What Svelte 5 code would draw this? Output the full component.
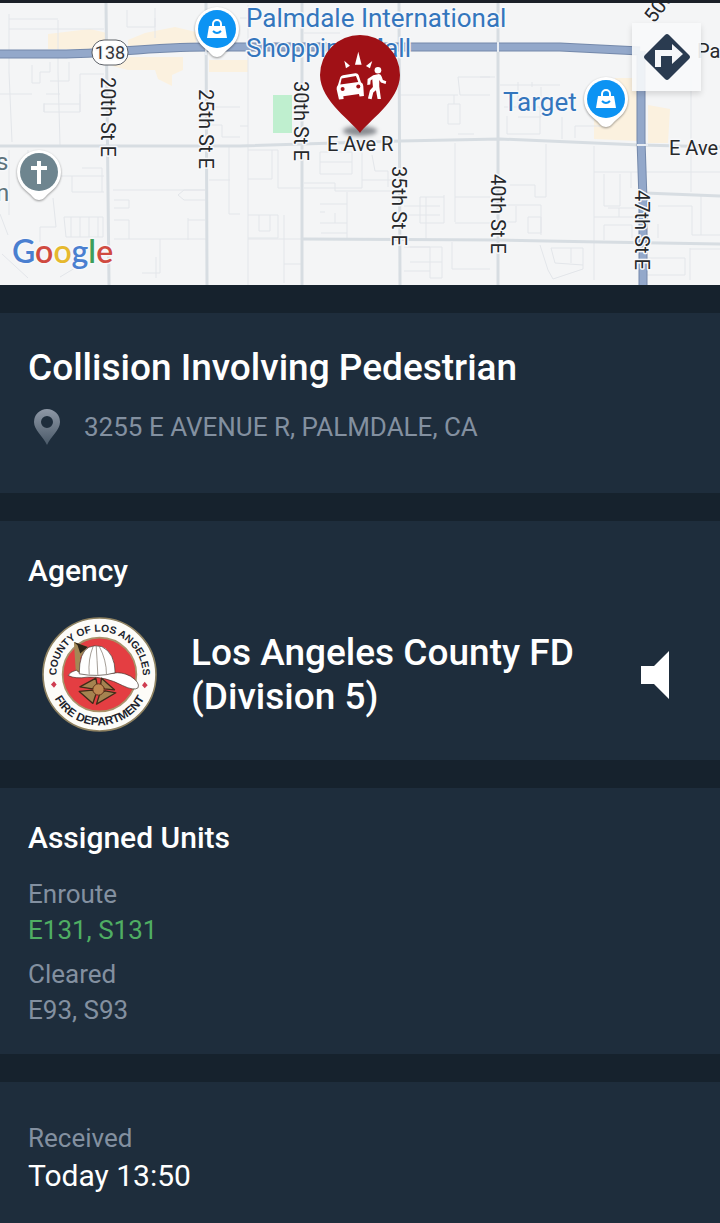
<script lang="ts">
	const incident = {
		type: 'Collision Involving Pedestrian',
		address: '3255 E AVENUE R, PALMDALE, CA',
		agency: 'Los Angeles County FD (Division 5)',
		received: 'Today 13:50'
	};

	const units = [
		{ status: 'Enroute', names: 'E131, S131', active: true },
		{ status: 'Cleared', names: 'E93, S93', active: false }
	];

	const streets = [
		{ name: '20th St E', x: 101, y: 77 },
		{ name: '25th St E', x: 199, y: 89 },
		{ name: '30th St E', x: 294, y: 81 },
		{ name: '35th St E', x: 392, y: 166 },
		{ name: '40th St E', x: 491, y: 174 },
		{ name: '47th St E', x: 635, y: 190 }
	];

	const google = [
		{ letter: 'G', color: '#4a7fd0' },
		{ letter: 'o', color: '#d04a40' },
		{ letter: 'o', color: '#e6b92e' },
		{ letter: 'g', color: '#4a7fd0' },
		{ letter: 'l', color: '#3d9e5a' },
		{ letter: 'e', color: '#d04a40' }
	];
</script>

{#snippet teardrop(x: number, y: number)}
	<path class="poi" transform="translate({x} {y})" d="M0 28C-4 28-6 25-9 22C-13 18-22 13-22 0A22 22 0 0 1 22 0C22 13 13 18 9 22C6 25 4 28 0 28Z" />
{/snippet}

{#snippet shop(x: number, y: number)}
	{@render teardrop(x, y)}
	<g transform="translate({x} {y})">
		<circle r="19" fill="#0c93f3" />
		<path d="M-8-3H8L10 9H-10Z" fill="#fff" />
		<path d="M-4-3V-5A4 4 0 0 1 4-5V-3" fill="none" stroke="#fff" stroke-width="2" />
		<path d="M-4 2Q0 6 4 2" fill="none" stroke="#0c93f3" stroke-width="2" />
	</g>
{/snippet}

<main>
	<div class="map">
		<svg class="tiles" viewBox="0 3 720 282" preserveAspectRatio="xMidYMid slice" role="img" aria-label="Map of the incident">
			<rect y="3" width="720" height="282" fill="#f4f5f6" />
			<g fill="#fbf1df">
				<path d="M48 34L90 29L107 33V49H48ZM128 40L145 33L175 27L196 32V46L128 50ZM112 66L130 57H183V70L172 75V86L158 79L155 70L128 70ZM209 60H248V72H209Z" />
				<path d="M594 112L615 102V78H637V141L594 139ZM648 105L670 109L668 143H648Z" />
			</g>
			<path d="M273 95H292V133H273Z" fill="#bfefcf" />
			<g class="lots">
				<path d="M9 14V72L12 142M9 19H58M9 29H104M58 20V72L60 145M127 10V27H155V8M155 18V38M32 65V83H40V72H50V62M50 81H69V62M0 94H32M46 94H60M44 103V112H80V74H104M44 112V104H80M80 94V112" />
				<path d="M0 214L8 235M9 150V215M28 150V165M40 176H104M72 176V192M82 168H102V192M72 192H104M53 198L56 227H40V242M64 217H103V237H66ZM71 217V237M80 217V237M89 217V237M98 217V237M2 254L28 278M60 277L75 268M113 190H205M114 200H129V208H114M114 220H129V239M114 239H207M188 218V240M188 220H205M160 239V273H142M156 257V278M178 195L184 190H205M178 195L184 200H205" />
				<path d="M214 107H240M208 125H222V137H240M209 180H230M229 147V214H240M240 18H300M304 33H340M248 5V285M240 126H248M248 150H278V188M272 150V179H248M278 188H300M248 215H278V238H248M259 215V231H270V215M284 215V283M248 239H303M284 264H303M304 188H362V145M362 180H400M320 162H352V174H320V152H352V162M304 183H335V191H400M347 192V239M320 204H347M320 223H347M320 212H325M335 213V223M372 155L375 171H388V187M321 233H347" />
				<path d="M400 95H458M458 77H490M458 77L460 95H490M448 104H460V124H448ZM454 104V95M458 134H474M455 143V222M444 197H420V223H444V195M404 206H440M404 215H440M426 197V239M455 197H490M455 223H490M410 247H430V278H442V247H404M410 262H442M452 242V269H490M404 271H430" />
				<path d="M480 77H495M500 85H560M504 107H540V134H507V116M518 82V107M518 117H541V87M532 82V87M562 117V139M575 138V126H600M546 144V197H535V185H510M500 205H541V235M516 206V222L503 222M528 217H541V233H528ZM594 146V280M594 172H720M604 174V206H620V174M631 172V188M594 217H634M604 225H632V238M608 208H636M604 225V240M619 208V217M658 206H692V235M658 224V238M692 235H720M701 196V235M691 76V192M640 258H685V275H640M690 248V280M690 249H720M540 245L548 270L553 279L583 269V248H551L555 263L583 265M571 248V263" />
			</g>
			<g class="roads">
				<path d="M0 146L240 146L400 141L500 139L640 145L720 147M303 239L500 240L600 242L720 244M645 193L720 196" />
				<path d="M106 3L109 285M206 3L207 285M302 3V285M399 3L400 285M498 3V285" />
			</g>
			<path class="highway-edge" d="M0 54H60C110 54 145 47 207 47H560L640 51M641 51V140L643 200V285" />
			<path class="highway" d="M0 54H60C110 54 145 47 207 47H560L640 51M641 51V140L643 200V285" />
			<path d="M206 39V55M498 42V52M637 145H648" stroke="#e8edf4" stroke-width="2" />

			<rect x="92" y="40" width="36" height="25" rx="12" fill="#fff" stroke="#5c6067" stroke-width="1" />
			<text class="shield" x="110" y="59">138</text>
			{#each streets as street}
				<text class="street" transform="translate({street.x} {street.y}) rotate(90)">{street.name}</text>
			{/each}
			<text class="street" x="327" y="151">E Ave R</text>
			<text class="street" x="669" y="155">E Ave</text>
			<text class="street" x="697" y="58">Pa</text>
			<text class="street" transform="translate(654 24) rotate(-53)">50th St E</text>
			<text class="place" x="246" y="27">Palmdale International</text>
			<text class="place" x="246" y="57">Shopping Mall</text>
			<text class="place" x="503" y="111">Target</text>
			<text class="church" x="-4" y="170">s</text>
			<text class="church" x="-4" y="201">n</text>

			{@render shop(217, 29)}
			{@render shop(606, 99)}
			{@render teardrop(39, 172)}
			<circle cx="39" cy="172" r="19" fill="#6e858f" />
			<path d="M39 161V184M31 168H47" stroke="#fff" stroke-width="4" />

			<!-- incident marker -->
			<ellipse class="shadow" cx="360" cy="131" rx="17" ry="5" />
			<path d="M360 133C354 123 320 101 320 75A40 40 0 0 1 400 75C400 101 366 123 360 133Z" fill="#a01116" />
			<g transform="translate(310 30) scale(0.333)" fill="#fff">
				<path d="M103 92L108 115L120 107ZM145 65L135 104H155ZM187 93L168 108L180 115Z" />
				<path fill-rule="evenodd" d="M91 142Q93 137 99 136L136 130Q143 129 146 135L153 157Q160 160 160 168L162 198L149 200L147 192L100 199L101 207L87 209L80 178Q79 170 84 165ZM95 146L91 164L145 156L138 138Z" />
				<circle cx="98" cy="177" r="6" fill="#a01116" />
				<circle cx="145" cy="170" r="6" fill="#a01116" />
				<circle cx="204" cy="121" r="10" />
				<path d="M190 136L207 132Q213 133 215 140L219 150L229 154L227 162L213 158L208 150V170L213 207H203L198 181L190 188L185 208L174 206L180 181L189 171L187 148L182 152L181 164L172 165L173 147Z" />
			</g>
			<text class="google" x="12" y="263">{#each google as { letter, color }}<tspan fill={color}>{letter}</tspan>{/each}</text>
		</svg>

		<button class="directions" aria-label="Directions">
			<svg viewBox="0 0 48 48" width="48" height="48" aria-hidden="true">
				<path d="M22 2Q24 0 26 2L46 22Q48 24 46 26L26 46Q24 48 22 46L2 26Q0 24 2 22Z" fill="#2a3b50" />
				<path d="M12 34V17H29V11L40 21L29 31V23H18V34Z" fill="#f6f7f9" />
			</svg>
		</button>
	</div>

	<section class="incident">
		<h1>{incident.type}</h1>
		<p class="address">
			<svg viewBox="0 0 26 36" width="26" height="36" aria-hidden="true">
				<defs>
					<linearGradient id="pin" x2="0" y2="1">
						<stop stop-color="#8e98a6" />
						<stop offset="1" stop-color="#4a5968" />
					</linearGradient>
				</defs>
				<path fill="url(#pin)" fill-rule="evenodd" d="M13 0A13 13 0 0 1 26 13C26 21 17 27 13 36C9 27 0 21 0 13A13 13 0 0 1 13 0ZM13 7A6 6 0 0 0 13 19A6 6 0 0 0 13 7Z" />
			</svg>
			{incident.address}
		</p>
	</section>

	<section class="agency">
		<h2>Agency</h2>
		<div class="agency-row">
			<svg class="seal" viewBox="36 38 346 346" role="img" aria-label="County of Los Angeles Fire Department">
				<defs>
					<path id="seal-top" d="M82 240A130 130 0 1 1 336 240" />
					<path id="seal-bottom" d="M56 211A153 153 0 0 0 362 211" />
				</defs>
				<circle cx="209" cy="211" r="170" fill="#fdfcf8" stroke="#8f8261" stroke-width="5" />
				<circle cx="209" cy="211" r="111" fill="#e43e42" stroke="#a8926a" stroke-width="5" />
				<text class="ring-top"><textPath href="#seal-top" startOffset="50%">COUNTY OF LOS ANGELES</textPath></text>
				<text class="ring-bottom"><textPath href="#seal-bottom" startOffset="50%">FIRE DEPARTMENT</textPath></text>
				<path d="M72 231L80 241L72 251L63 241ZM345 233L354 243L345 252L337 243Z" fill="#cf3d50" />
				<path d="M132 113L174 128L151 160L148 210L138 208Z" fill="#a48855" />
				<path d="M132 113L174 128L151 148L143 123Z" fill="#2c2418" />
				<path d="M115 214Q119 203 139 198L151 207L250 207Q275 202 302 216Q332 235 325 251Q313 261 278 244Q225 216 172 219Q135 225 115 214Z" fill="#fff" stroke="#40322b" stroke-width="2" />
				<path d="M148 209Q148 144 177 129Q194 121 216 127Q256 147 256 206Q205 220 148 209Z" fill="#fff" stroke="#40322b" stroke-width="2" />
				<path d="M190 126Q174 166 178 211M199 125Q202 168 204 213M208 126Q230 167 230 211" fill="none" stroke="#756d62" stroke-width="2" />
				<!-- maltese cross, one wedge for each arm -->
				<g fill="#a58350" stroke="#412b19" stroke-width="4" stroke-linejoin="round">
					<path d="M198 222L150 248L188 254L202 244Z" />
					<path d="M215 222L254 257L224 254L212 244Z" />
					<path d="M148 262L189 298L199 268L188 258Z" />
					<path d="M258 266L200 300L210 268L226 260Z" />
				</g>
				<circle cx="206" cy="256" r="17" fill="#bd8852" stroke="#62341d" stroke-width="3" />
			</svg>
			<h3>{incident.agency}</h3>
			<button class="listen" aria-label="Listen to agency">
				<svg viewBox="0 0 28 48" width="28" height="48" aria-hidden="true">
					<path d="M0 15H13L28 0V48L13 33H0Z" fill="#fff" />
				</svg>
			</button>
		</div>
	</section>

	<section class="units">
		<h2>Assigned Units</h2>
		<dl>
			{#each units as unit}
				<div>
					<dt>{unit.status}</dt>
					<dd class:active={unit.active}>{unit.names}</dd>
				</div>
			{/each}
		</dl>
	</section>

	<section class="received">
		<dl>
			<dt>Received</dt>
			<dd>{incident.received}</dd>
		</dl>
	</section>
</main>

<style>
	:global(body) {
		margin: 0;
		background: #1e2d3c;
	}

	main {
		display: flex;
		flex-direction: column;
		gap: 28px;
		min-height: 100vh;
		background: #16222d;
		color: #fff;
		font-family: Roboto, 'Liberation Sans', sans-serif;
		font-size: 26px;
		line-height: 36px;
	}

	h1,
	h2,
	h3,
	p,
	dl,
	dd {
		margin: 0;
		font-weight: 500;
	}

	button {
		display: grid;
		place-items: center;
		padding: 0;
		border: none;
		background: none;
		cursor: pointer;
	}

	section {
		padding: 28px;
		background: #1e2d3c;
	}

	.map {
		position: relative;
		padding-top: 3px;
		background: #1b2028;
	}

	.tiles {
		display: block;
		width: 100%;
		height: 282px;
	}

	.lots {
		fill: none;
		stroke: #e3e6ea;
		stroke-width: 1;
	}

	.roads {
		fill: none;
		stroke: #d7dde2;
		stroke-width: 3;
	}

	.highway,
	.highway-edge {
		fill: none;
		stroke: #93a8ca;
		stroke-width: 7;
	}

	.highway-edge {
		stroke: #7489ab;
		stroke-width: 9;
	}

	.tiles text {
		paint-order: stroke;
		stroke: #f7f8fa;
		stroke-width: 3;
		stroke-linejoin: round;
	}

	.tiles .street {
		fill: #26282b;
		font-size: 20px;
	}

	.tiles .shield {
		fill: #333539;
		font-size: 18px;
		text-anchor: middle;
	}

	.tiles .place {
		fill: #3476bd;
		font-size: 26px;
	}

	.tiles .church {
		fill: #5d737c;
		font-size: 24px;
	}

	.tiles .google {
		font-family: Lato, sans-serif;
		font-size: 32px;
		font-weight: 600;
	}

	.poi {
		fill: #fff;
		filter: drop-shadow(0 1px 1px #0006);
	}

	.shadow {
		fill: #8a8d92;
		filter: blur(2px);
	}

	.directions {
		position: absolute;
		top: 23px;
		right: 19px;
		width: 69px;
		height: 68px;
		background: #f8f9fbe6;
		box-shadow: 0 3px 6px #0002;
	}

	.incident {
		padding-block: 30px 48px;
	}

	h1 {
		font-size: 37px;
		line-height: 50px;
	}

	.address {
		display: flex;
		align-items: center;
		gap: 24px;
		margin-top: 16px;
		padding-left: 6px;
		color: #8390a0;
		font-weight: 400;
	}

	h2 {
		font-size: 30px;
		line-height: 44px;
	}

	.agency-row {
		display: flex;
		align-items: center;
		gap: 34px;
		margin-top: 24px;
		padding: 0 22px 0 14px;
	}

	.seal {
		flex: none;
		width: 115px;
		height: 115px;
	}

	.seal text {
		fill: #20232c;
		font-family: 'Liberation Sans', sans-serif;
		font-weight: 700;
		text-anchor: middle;
	}

	.seal .ring-top {
		font-size: 31px;
	}

	.seal .ring-bottom {
		font-size: 35px;
	}

	h3 {
		flex: 1;
		font-size: 37px;
		line-height: 44px;
	}

	.listen {
		width: 30px;
		height: 48px;
	}

	dt,
	dd {
		color: #8390a0;
		font-weight: 400;
	}

	.units {
		padding-bottom: 26px;
	}

	.units dl {
		display: grid;
		gap: 8px;
		margin-top: 16px;
	}

	.units .active {
		color: #4fae63;
	}

	.received {
		flex: 1;
		padding-top: 38px;
	}

	.received dd {
		color: #fff;
		font-size: 30px;
		line-height: 40px;
	}
</style>
